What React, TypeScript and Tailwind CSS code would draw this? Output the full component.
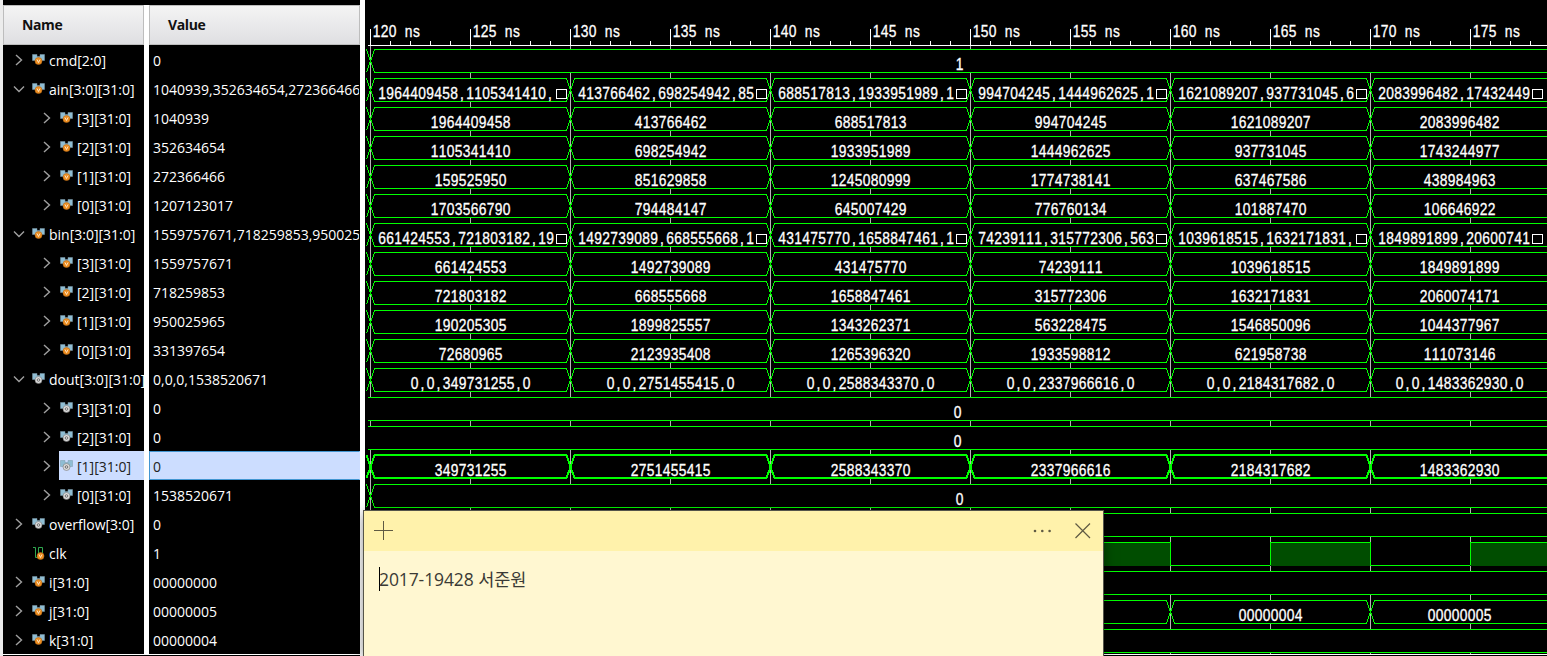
const names = [
  ["cmd[2:0]", "0", 0, "r", "v"],
  ["ain[3:0][31:0]", "1040939,352634654,272366466,1207123017", 0, "d", "v"],
  ["[3][31:0]", "1040939", 1, "r", "v"],
  ["[2][31:0]", "352634654", 1, "r", "v"],
  ["[1][31:0]", "272366466", 1, "r", "v"],
  ["[0][31:0]", "1207123017", 1, "r", "v"],
  ["bin[3:0][31:0]", "1559757671,718259853,950025965", 0, "d", "v"],
  ["[3][31:0]", "1559757671", 1, "r", "v"],
  ["[2][31:0]", "718259853", 1, "r", "v"],
  ["[1][31:0]", "950025965", 1, "r", "v"],
  ["[0][31:0]", "331397654", 1, "r", "v"],
  ["dout[3:0][31:0]", "0,0,0,1538520671", 0, "d", "w"],
  ["[3][31:0]", "0", 1, "r", "w"],
  ["[2][31:0]", "0", 1, "r", "w"],
  ["[1][31:0]", "0", 1, "r", "w"],
  ["[0][31:0]", "1538520671", 1, "r", "w"],
  ["overflow[3:0]", "0", 0, "r", "w"],
  ["clk", "1", 0, "", "c"],
  ["i[31:0]", "00000000", 0, "r", "v"],
  ["j[31:0]", "00000005", 0, "r", "v"],
  ["k[31:0]", "00000004", 0, "r", "v"],
] as const;

const SELECTED = 14;

const buses: Record<number, string[]> = {
  1: ["1964409458,1105341410,□", "413766462,698254942,85□", "688517813,1933951989,1□", "994704245,1444962625,1□", "1621089207,937731045,6□", "2083996482,17432449□"],
  2: ["1964409458", "413766462", "688517813", "994704245", "1621089207", "2083996482"],
  3: ["1105341410", "698254942", "1933951989", "1444962625", "937731045", "1743244977"],
  4: ["159525950", "851629858", "1245080999", "1774738141", "637467586", "438984963"],
  5: ["1703566790", "794484147", "645007429", "776760134", "101887470", "106646922"],
  6: ["661424553,721803182,19□", "1492739089,668555668,1□", "431475770,1658847461,1□", "74239111,315772306,563□", "1039618515,1632171831,□", "1849891899,20600741□"],
  7: ["661424553", "1492739089", "431475770", "74239111", "1039618515", "1849891899"],
  8: ["721803182", "668555668", "1658847461", "315772306", "1632171831", "2060074171"],
  9: ["190205305", "1899825557", "1343262371", "563228475", "1546850096", "1044377967"],
  10: ["72680965", "2123935408", "1265396320", "1933598812", "621958738", "111073146"],
  11: ["0,0,349731255,0", "0,0,2751455415,0", "0,0,2588343370,0", "0,0,2337966616,0", "0,0,2184317682,0", "0,0,1483362930,0"],
  14: ["349731255", "2751455415", "2588343370", "2337966616", "2184317682", "1483362930"],
  19: ["", "", "", "", "00000004", "00000005"],
};

const constants: Record<number, { value: string; x: number; start: boolean }> = {
  0: { value: "1", x: 959, start: true },
  12: { value: "0", x: 957, start: false },
  13: { value: "0", x: 957, start: false },
  15: { value: "0", x: 959, start: true },
  16: { value: "", x: 957, start: false },
  18: { value: "", x: 957, start: false },
  20: { value: "", x: 957, start: false },
};

// The waveform area starts at this page column; drawing uses page columns.
const LEFT = 365;
const RIGHT = 1547;

// Narrow characters, each centred in a cell of 8 pixels.
const SQUEEZE = 0.88;

function CellText({ text, x, y }: { text: string; x: number; y: number }) {
  const xs = text.split("").map((_, i) => (x + i * 8 + 4) / SQUEEZE).join(" ");
  return (
    <text x={xs} y={y} transform={`scale(${SQUEEZE} 1)`} textAnchor="middle" fill="#fff" stroke="#fff" strokeWidth="0.3" fontSize="15.7" fontFamily="'Liberation Sans', Arial, sans-serif">
      {text}
    </text>
  );
}

function Bus({ row, values }: { row: number; values: string[] }) {
  const top = 49 + 29 * row;
  const bottom = top + 23;
  const mid = top + 12;
  const thick = row === SELECTED;
  const t = thick ? top : top + 0.5;
  const b = thick ? bottom : bottom + 0.5;
  return (
    <g>
      {values.map((value, k) => {
        const x = 370 + 200 * k;
        const end = Math.min(x + 200, RIGHT + 10);
        const last = end > RIGHT;
        const centre = last ? 1459.5 : x + 100.5;
        const cut = value.endsWith("□");
        const body = cut ? value.slice(0, -1) : value;
        const start = cut ? x + 8 : centre - value.length * 4;
        return (
          <g key={k}>
            <rect x={x} y={top} width="1" height="24" fill="#b4b4b4" />
            <path
              d={`M${x - 3.5} ${t}L${x + 0.5} ${mid}L${x - 3.5} ${b}M${last ? end : end - 3.5} ${t}H${x + 4.5}L${x + 0.5} ${mid}L${x + 4.5} ${b}H${last ? end : end - 3.5}`}
              fill="none" stroke="#00ff00" strokeWidth={thick ? 2 : 1} shapeRendering="crispEdges"
            />
            {body && <CellText text={body} x={start} y={top + 20.8} />}
            {cut && <rect x={x + 8 + body.length * 8 + 2.5} y={top + 11.5} width="10" height="9" fill="none" stroke="#fff" />}
          </g>
        );
      })}
    </g>
  );
}

function Waves() {
  const majors = Array.from({ length: 12 }, (_, i) => 370 + 100 * i);
  const minors = Array.from({ length: 59 }, (_, i) => 370 + 20 * i).filter((x) => (x - 370) % 100 !== 0);
  const clock = [970, 1070, 1170, 1270, 1370, 1470];
  return (
    <svg width={RIGHT - LEFT} height="656" viewBox={`${LEFT} 0 ${RIGHT - LEFT} 656`} className="block">
      {majors.map((x, i) => (
        <g key={x}>
          <rect x={x} y="46" width="1" height="608" fill="#b4b4b4" />
          <rect x={x} y="29" width="1" height="17" fill="#fff" />
          <CellText text={`${120 + 5 * i} ns`} x={x + 2.5} y={36.9} />
        </g>
      ))}
      {minors.map((x) => <rect key={x} x={x} y="41" width="1" height="4" fill="#fff" />)}
      <rect x="368" y="45" width="1179" height="1" fill="#fff" />
      {names.map((_, i) => <rect key={i} x="365" y={49 + 29 * i} width="1182" height="24" fill="#000" />)}
      {Object.entries(buses).map(([row, values]) => <Bus key={row} row={Number(row)} values={values} />)}
      {Object.entries(constants).map(([key, c]) => {
        const top = 49 + 29 * Number(key);
        return (
          <g key={key}>
            {c.start && <rect x="370" y={top} width="1" height="24" fill="#b4b4b4" />}
            <path
              d={c.start
                ? `M366.5 ${top + 0.5}L370.5 ${top + 12}L366.5 ${top + 23.5}M1547 ${top + 0.5}H374.5L370.5 ${top + 12}L374.5 ${top + 23.5}H1547`
                : `M368 ${top + 0.5}H1547M368 ${top + 23.5}H1547`}
              fill="none" stroke="#00ff00" shapeRendering="crispEdges"
            />
            {c.value && <CellText text={c.value} x={c.x - 3.5} y={top + 20.8} />}
          </g>
        );
      })}
      {clock.map((x, i) => (
        <g key={x}>
          {i % 2 === 1 && <rect x={x} y="542" width="100" height="24" fill="#004d00" />}
          <path d={i % 2 === 1 ? `M${x + 0.5} 565V542.5H${x + 100.5}V565` : `M${x} 565.5H${x + 100}`} fill="none" stroke="#00ff00" shapeRendering="crispEdges" />
        </g>
      ))}
      <rect x="365" y="654" width="1182" height="1" fill="#fff" />
    </svg>
  );
}

function SignalIcon({ kind }: { kind: string }) {
  const orange = kind !== "w";
  return (
    <svg width="14" height="14" viewBox="0 0 14 14" className="shrink-0">
      {kind === "c" ? (
        <path d="M1 1.5H3.5V11.5H6.5V1.5H10.5V7" fill="none" stroke="#2fa84f" />
      ) : (
        <path d="M0.5 1.5H5V3.5H8V1.5H12.5V7.5H10L6.5 9L3 7.5H0.5Z" fill="#8fbdd3" stroke="#7d9aa8" strokeWidth="0.5" />
      )}
      <circle cx={kind === "c" ? 8.5 : 6.5} cy={kind === "c" ? 10 : 8} r="3.5" fill={orange ? "#ee8f22" : "#dcdcdc"} stroke={orange ? "#b96a16" : "#777"} strokeWidth="0.6" />
      {orange ? (
        <path d={kind === "c" ? "M7 8.5L8.5 11.5L10 8.5" : "M5 6.5L6.5 9.5L8 6.5"} fill="none" stroke="#ffe9cc" strokeWidth="0.9" />
      ) : (
        <circle cx="6.5" cy="8" r="1.3" fill="none" stroke="#666" strokeWidth="0.9" />
      )}
    </svg>
  );
}

function Chevron({ dir }: { dir: string }) {
  return (
    <svg width="12" height="12" viewBox="0 0 12 12" className="shrink-0" fill="none" stroke="#a0a0a0" strokeWidth="1.4">
      {dir === "r" && <path d="M3 1L8.5 6L3 11" />}
      {dir === "d" && <path d="M1 3.5L6 8.5L11 3.5" />}
    </svg>
  );
}

const header = "h-10 shrink-0 border border-[#bdbdbd] bg-linear-to-b from-[#f4f4f4] to-[#dfdfe2] pl-[18px] text-[14px] leading-[38px] font-bold tracking-[-0.4px] text-[#111]";

export default function App() {
  return (
    <div className="relative flex h-[656px] w-[1547px] overflow-hidden bg-black font-['Open_Sans','Noto_Sans',sans-serif] text-[14px] text-white">
      <div className="w-[3px] shrink-0 bg-[#ececec]" />
      <div className="flex w-[357px] shrink-0 flex-col pt-[5px]">
        <div className="flex h-[650px] border-b border-white">
          <div className="flex w-[141px] shrink-0 flex-col overflow-hidden">
            <div className={header}>Name</div>
            {names.map(([name, , depth, dir, kind], i) => (
              <div key={i} className={`flex h-[29px] shrink-0 items-center whitespace-nowrap ${depth ? "pl-[38px]" : "pl-[10px]"}`}>
                <Chevron dir={dir} />
                <div className={`ml-[6px] flex h-[29px] min-w-[100px] items-center gap-[3px] pl-[1px] ${i === SELECTED ? "bg-[#ccddff] text-[#222]" : ""}`}>
                  <SignalIcon kind={kind} />
                  <span className="pt-[2px]">{name}</span>
                </div>
              </div>
            ))}
          </div>
          <div className="w-[5px] shrink-0 bg-white" />
          <div className="flex w-[211px] shrink-0 flex-col overflow-hidden">
            <div className={header}>Value</div>
            {names.map(([, value], i) => (
              <div key={i} className={`h-[29px] shrink-0 overflow-hidden border pl-[3px] leading-[29px] whitespace-nowrap ${i === SELECTED ? "border-[#4296d2] border-r-[#ccddff] bg-[#ccddff] text-[#222]" : "border-transparent"}`}>
                {value}
              </div>
            ))}
          </div>
        </div>
      </div>
      <div className="w-[5px] shrink-0 bg-white" />
      <Waves />
      <div className="absolute top-[511px] left-[364px] h-[145px] w-[739px] bg-[#fff7d1] shadow-[0_0_0_1px_#55554a,0_2px_12px_rgba(0,0,0,0.5)]">
        <div className="flex h-10 items-center bg-[#fff2ab] pr-[11px] pl-[9px]">
          <svg width="20" height="20" viewBox="0 0 20 20" stroke="#5f5a43" fill="none">
            <path d="M10.5 0V19M1 9.5H20" />
          </svg>
          <svg width="20" height="20" viewBox="0 0 20 20" fill="#5f5a43" className="ml-auto">
            <circle cx="3" cy="10" r="1.3" />
            <circle cx="10.3" cy="10" r="1.3" />
            <circle cx="17.6" cy="10" r="1.3" />
          </svg>
          <svg width="18" height="18" viewBox="0 0 18 18" stroke="#5f5a43" strokeWidth="1.2" fill="none" className="ml-[22px]">
            <path d="M1.5 1.5L16 16M16 1.5L1.5 16" />
          </svg>
        </div>
        <div className="flex items-center pt-[16px] pl-[15px] text-[17.5px] text-[#3a3a35]">
          <div className="h-6 w-px bg-black" />
          <span className="-ml-px font-['Open_Sans','Noto_Sans_CJK_KR',sans-serif] leading-6 tracking-[-0.1px]">2017-19428 서준원</span>
        </div>
      </div>
    </div>
  );
}
